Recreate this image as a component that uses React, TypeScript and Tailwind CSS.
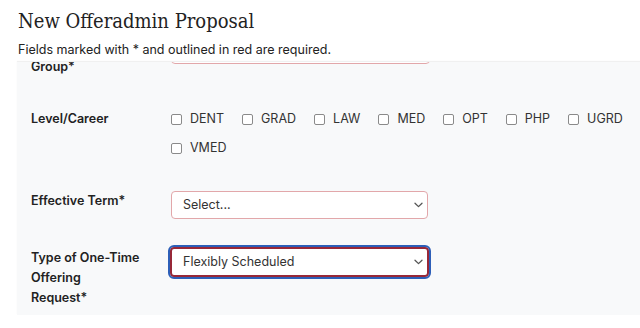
import React from "react";

const Chevron = () => (
  <svg width="9" height="6" viewBox="0 0 9 6" className="absolute right-[4px] top-1/2 -translate-y-1/2">
    <path d="M1 1.2 L4.5 4.6 L8 1.2" fill="none" stroke="#555" strokeWidth="1.3" strokeLinecap="round" strokeLinejoin="round" />
  </svg>
);

const Check = ({ label }: { label: string }) => (
  <div className="flex items-center gap-[8px] h-[20px]">
    <span className="w-[11px] h-[11px] border border-[#8a8a8a] rounded-[2px] bg-white" />
    <span>{label}</span>
  </div>
);

export default function App() {
  const font = { fontFamily: "Inter, 'Noto Sans', sans-serif" };
  return (
    <div className="w-[640px] h-[328px] bg-white overflow-hidden text-[#222]" style={font}>
      <div className="px-[18px] pt-[9px] h-[62px]">
        <h1
          className="text-[20px] leading-[24px] text-[#222]"
          style={{ fontFamily: "'DejaVu Serif Condensed', 'DejaVu Serif', serif", fontStretch: "condensed" }}
        >
          New Offeradmin Proposal
        </h1>
        <p className="mt-[9px] text-[12.5px] leading-[16px] text-[#222]">
          Fields marked with * and outlined in red are required.
        </p>
      </div>
      <div className="ml-[17px] h-[253px] bg-[#f8f9fa] overflow-hidden shadow-[0_-1px_1px_rgba(0,0,0,0.06)]">
        <div className="-mt-[26px] pl-[14px] text-[12.5px] leading-[20px]">
          <div className="grid grid-cols-[140px_1fr] h-[40px]">
            <div className="font-semibold pt-[21px]">Group*</div>
            <div className="w-[259px] h-[28px] bg-white border border-[#e2a7aa] rounded-[4px]" />
          </div>
          <div className="grid grid-cols-[140px_1fr] mt-[33px]">
            <div className="font-semibold">Level/Career</div>
            <div className="flex flex-wrap gap-x-[18px] gap-y-[9px] pr-[4px] text-[#333]">
              {["DENT", "GRAD", "LAW", "MED", "OPT", "PHP", "UGRD", "VMED"].map((l) => (
                <Check key={l} label={l} />
              ))}
            </div>
          </div>
          <div className="grid grid-cols-[140px_1fr] mt-[33px]">
            <div className="font-semibold">Effective Term*</div>
            <div className="relative w-[257px] h-[28px] bg-white border border-[#e2a7aa] rounded-[4px] flex items-center px-[11px] text-[#333]">
              Select...
              <Chevron />
            </div>
          </div>
          <div className="grid grid-cols-[140px_1fr] mt-[29px]">
            <div className="font-semibold">
              <div>Type of One-Time</div>
              <div>Offering</div>
              <div>Request*</div>
            </div>
            <div className="relative -ml-[1px] -mt-[1px] w-[259px] h-[30px] bg-white border-2 border-[#982838] rounded-[4px] outline-2 outline-solid outline-[#2d5fb8] flex items-center px-[11px] text-[#333]">
              Flexibly Scheduled
              <Chevron />
            </div>
          </div>
        </div>
      </div>
    </div>
  );
}
